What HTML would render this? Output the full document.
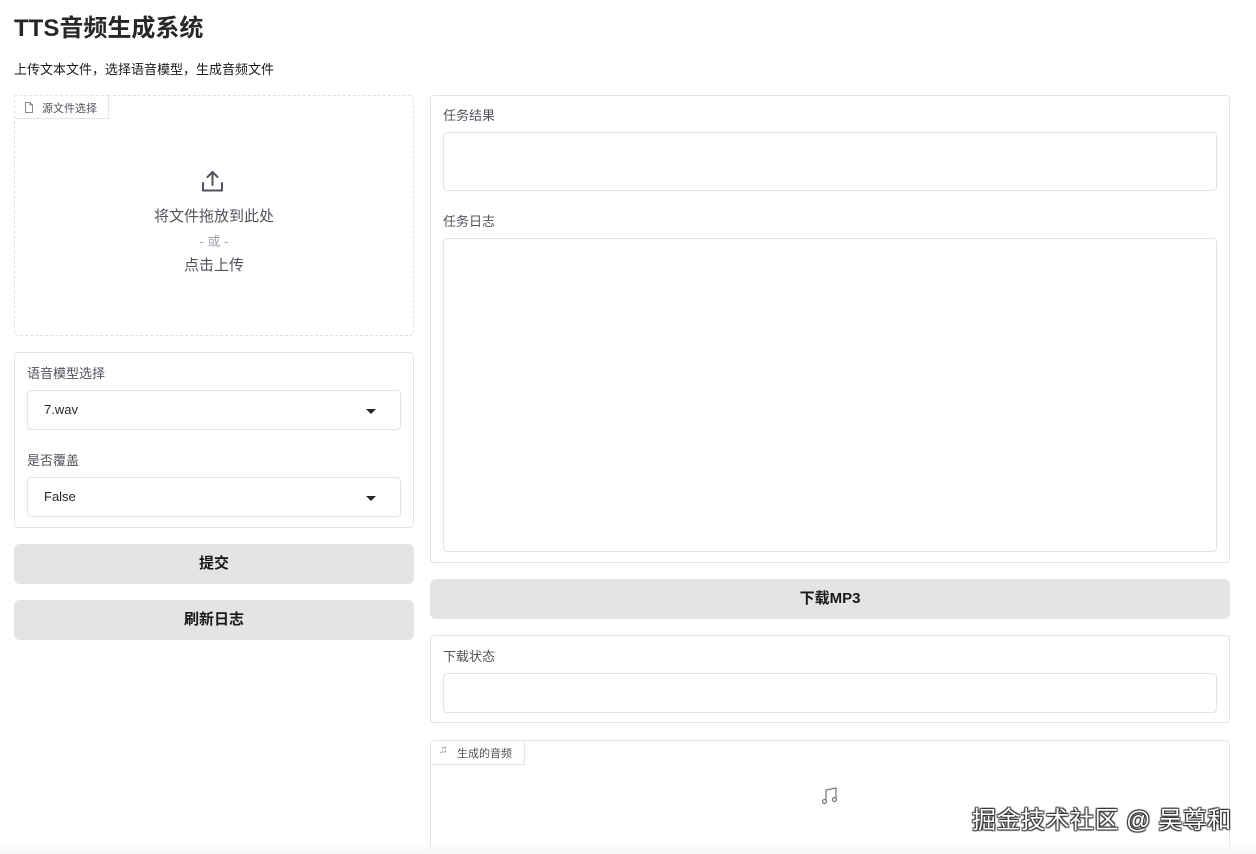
<!DOCTYPE html>
<html><head><meta charset="utf-8"><style>
*{box-sizing:border-box;margin:0;padding:0}
body{width:1256px;height:854px;background:#fff;position:relative;overflow:hidden;font-family:"Liberation Sans","Noto Sans CJK SC",sans-serif;color:#27272a}
.a{position:absolute}
.panel{position:absolute;border:1px solid #e4e4e7;border-radius:4px;background:#fff}
.lbl{position:absolute;font-size:13px;color:#52525b}
.box{position:absolute;border:1px solid #e4e4e7;border-radius:4px;background:#fff}
.btn{position:absolute;background:#e4e4e7;border-radius:6px;font-size:15px;font-weight:bold;text-align:center;color:#18181b}
.sel{position:absolute;border:1px solid #e4e4e7;border-radius:4px;font-size:13px;padding-left:16px;color:#27272a}
.tri{position:absolute;right:24px;top:18px;width:0;height:0;border-left:5px solid transparent;border-right:5px solid transparent;border-top:5px solid #27272a}
.tab{position:absolute;border-right:1px solid #e4e4e7;border-bottom:1px solid #e4e4e7;font-size:11px;color:#52525b;background:#fff}
</style></head><body>
<div class="a" style="left:14px;top:8px;font-size:24px;font-weight:bold;color:#27272a">TTS音频生成系统</div>
<div class="a" style="left:14px;top:59px;font-size:13px;color:#18181b">上传文本文件，选择语音模型，生成音频文件</div>

<div class="a" style="left:14px;top:95px;width:400px;height:241px;border:1px dashed #e0e0e3;border-radius:4px"></div>
<div class="tab" style="left:14px;top:95px;width:95px;height:24px;border-top:1px dashed #e4e4e7;border-left:1px dashed #e4e4e7"><svg class="a" style="left:9px;top:6px" width="10" height="11" viewBox="0 0 10 11"><path d="M1.5 .5h4.5l2.5 2.5v7.5h-7z M6 .5v2.5h2.5" fill="none" stroke="#888" stroke-width="1"/></svg><span class="a" style="left:27px;top:4px">源文件选择</span></div>
<svg class="a" style="left:201px;top:170px" width="23" height="23" viewBox="0 0 23 23"><path d="M11.5 15V2M6.5 7l5-5 5 5M2 13v7.5h19V13" fill="none" stroke="#52525b" stroke-width="2" stroke-linecap="round" stroke-linejoin="round"/></svg>
<div class="a" style="left:14px;width:400px;top:205px;text-align:center;font-size:15px;color:#52525b">将文件拖放到此处</div>
<div class="a" style="left:14px;width:400px;top:231px;text-align:center;font-size:13px;color:#a1a1aa">- 或 -</div>
<div class="a" style="left:14px;width:400px;top:254px;text-align:center;font-size:15px;color:#52525b">点击上传</div>

<div class="panel" style="left:14px;top:352px;width:400px;height:176px"></div>
<div class="lbl" style="left:27px;top:363px">语音模型选择</div>
<div class="sel" style="left:27px;top:390px;width:374px;height:40px;line-height:38px">7.wav<div class="tri"></div></div>
<div class="lbl" style="left:27px;top:450px">是否覆盖</div>
<div class="sel" style="left:27px;top:477px;width:374px;height:40px;line-height:38px">False<div class="tri"></div></div>

<div class="btn" style="left:14px;top:544px;width:400px;height:40px;line-height:40px">提交</div>
<div class="btn" style="left:14px;top:600px;width:400px;height:40px;line-height:40px">刷新日志</div>

<div class="panel" style="left:430px;top:95px;width:800px;height:468px"></div>
<div class="lbl" style="left:443px;top:105px">任务结果</div>
<div class="box" style="left:443px;top:132px;width:774px;height:59px"></div>
<div class="lbl" style="left:443px;top:211px">任务日志</div>
<div class="box" style="left:443px;top:238px;width:774px;height:314px"></div>

<div class="btn" style="left:430px;top:579px;width:800px;height:40px;line-height:40px">下载MP3</div>

<div class="panel" style="left:430px;top:635px;width:800px;height:88px"></div>
<div class="lbl" style="left:443px;top:646px">下载状态</div>
<div class="box" style="left:443px;top:673px;width:774px;height:40px"></div>

<div class="panel" style="left:430px;top:740px;width:800px;height:111px"></div>
<div class="tab" style="left:431px;top:741px;width:94px;height:24px"><span class="a" style="left:8px;top:3px;font-size:11px;color:#888">♫</span><span class="a" style="left:26px;top:4px">生成的音频</span></div>
<svg class="a" style="left:821px;top:787px" width="18" height="18" viewBox="0 0 18 18"><path d="M5 14V3l10-2v11" fill="none" stroke="#777" stroke-width="1.2"/><circle cx="3.5" cy="14.5" r="2" fill="none" stroke="#777" stroke-width="1.2"/><circle cx="13.5" cy="12.5" r="2" fill="none" stroke="#777" stroke-width="1.2"/></svg>
<div class="a" style="left:972px;top:800px;font-size:24px;letter-spacing:0.5px;color:#fff;text-shadow:0 0 1px #333,1px 1px 1px #333,-1px -1px 1px #333,1px -1px 1px #333,-1px 1px 1px #333">掘金技术社区 @ 吴尊和</div>
<div class="a" style="left:0;top:840px;width:1256px;height:14px;background:linear-gradient(#fff0,#f6f6f6)"></div>
</body></html>
